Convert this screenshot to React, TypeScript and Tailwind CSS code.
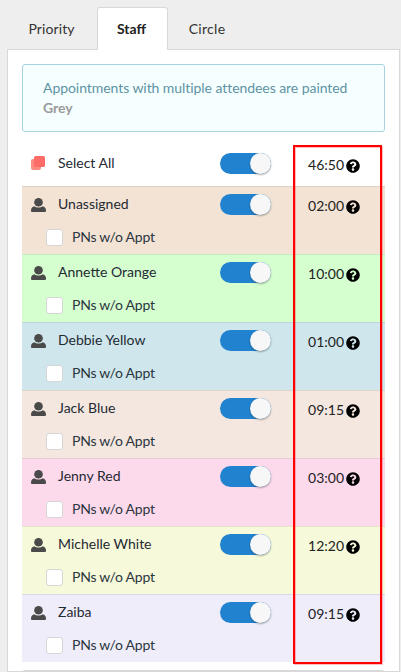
import { FaQuestionCircle } from 'react-icons/fa';

const staff = [
    { name: 'Unassigned', time: '02:00', bg: 'bg-[#f3e3d5]' },
    { name: 'Annette Orange', time: '10:00', bg: 'bg-[#d6ffd0]' },
    { name: 'Debbie Yellow', time: '01:00', bg: 'bg-[#cfe7ec]' },
    { name: 'Jack Blue', time: '09:15', bg: 'bg-[#f4e7df]' },
    { name: 'Jenny Red', time: '03:00', bg: 'bg-[#fdd9ec]' },
    { name: 'Michelle White', time: '12:20', bg: 'bg-[#f6f9da]' },
    { name: 'Zaiba', time: '09:15', bg: 'bg-[#efedfa]' },
];

function PersonIcon() {
    return (
        <svg viewBox="0 0 15 14" className="w-[15px] h-[14px] shrink-0" fill="#4a4a4a">
            <circle cx="7.5" cy="4.3" r="4.3" />
            <path d="M0 12.2C0 10 1.6 8.6 3.4 8.2 4.6 9.2 6 9.6 7.5 9.6s2.9-.4 4.1-1.4C13.4 8.6 15 10 15 12.2V13a1 1 0 0 1-1 1H1a1 1 0 0 1-1-1z" />
        </svg>
    );
}

function Toggle() {
    return (
        <div className="w-[51px] h-[21px] rounded-full bg-[#2183cf] relative shrink-0">
            <div className="absolute right-0 top-0 w-[21px] h-[21px] rounded-full bg-[#f7f7f7] shadow-[0_1px_2px_rgba(0,0,0,0.35)]" />
        </div>
    );
}

function Time({ value }: { value: string }) {
    return (
        <div className="w-[67px] ml-[22px] pt-[5px] flex items-center justify-end gap-[2px] text-[14px] text-[#222] leading-[20px]">
            <span className="pb-[2px]">{value}</span>
            <FaQuestionCircle className="w-[14px] h-[14px] text-black" />
        </div>
    );
}

function StaffRow({ name, time, bg }: { name: string; time: string; bg: string }) {
    return (
        <div className={`h-[68px] border-t border-[#00000014] ${bg}`}>
            <div className="flex items-center h-[21px] mt-[7px] pl-[9px]">
                <PersonIcon />
                <span className="ml-[12px] w-[162px] pb-[2px] text-[14px] text-[#1f2a33]">{name}</span>
                <Toggle />
                <Time value={time} />
            </div>
            <div className="flex items-center mt-[11px] pl-[24px]">
                <div className="w-[17px] h-[17px] rounded-[3px] bg-white border border-[#d6d6d6]" />
                <span className="ml-[9px] pb-[1px] text-[14px] tracking-[-0.25px] text-[#2b3640]">PNs w/o Appt</span>
            </div>
        </div>
    );
}

export default function App() {
    return (
        <div className="relative w-[401px] h-[672px] overflow-hidden bg-[#eeeeee] font-['Lato',sans-serif]">
            <div className="flex h-[50px] pt-[7px] pl-[7px]">
                <div className="w-[89px] flex items-center justify-center pb-[1px] text-[14px] tracking-[0.1px] text-[#333]">Priority</div>
                <div className="w-[71px] ml-[1px] h-[43px] relative z-10 flex items-center justify-center pb-[2px] pr-[2px] bg-white border border-b-0 border-[#d8d8d8] rounded-t-[3px] text-[14px] font-bold text-[#222]">
                    Staff
                </div>
                <div className="w-[78px] flex items-center justify-center pb-[1px] text-[14px] tracking-[0.3px] text-[#333]">Circle</div>
            </div>
            <div className="ml-[7px] -mt-px w-[393px] h-[623px] bg-white border border-[#d8d8d8] px-[14px] pt-[14px]">
                <div className="h-[68px] rounded-[3px] border border-[#a8d3de] bg-[#f6ffff] px-[20px] pt-[13px] text-[14px] leading-[20px] tracking-[-0.06px] text-[#5d93a3]">
                    Appointments with multiple attendees are painted
                    <div className="font-bold text-[#9a9a9a]">Grey</div>
                </div>
                <div className="flex items-center h-[21px] mt-[21px] mb-[12px] pl-[9px]">
                    <svg viewBox="0 0 14 14" className="w-[14px] h-[14px] shrink-0 -mt-[1px]">
                        <rect x="0" y="3" width="10" height="11" rx="2" fill="#fb8a80" />
                        <rect x="3" y="0" width="11" height="11" rx="1.5" fill="#ff6b66" />
                    </svg>
                    <span className="ml-[13px] w-[162px] pb-[2px] text-[14px] text-[#1f2a33]">Select All</span>
                    <Toggle />
                    <Time value="46:50" />
                </div>
                {staff.map((s) => (
                    <StaffRow key={s.name} {...s} />
                ))}
                <div className="mt-[8px] h-[4px] rounded-t-[3px] border border-b-0 border-[#d8d8d8]" />
            </div>
            <div className="absolute left-[293px] top-[145px] w-[89px] h-[519px] border-2 border-[#ff0000] shadow-[1px_1px_0_rgba(255,0,0,0.25),inset_1px_1px_0_rgba(255,0,0,0.25)] pointer-events-none" />
        </div>
    );
}
